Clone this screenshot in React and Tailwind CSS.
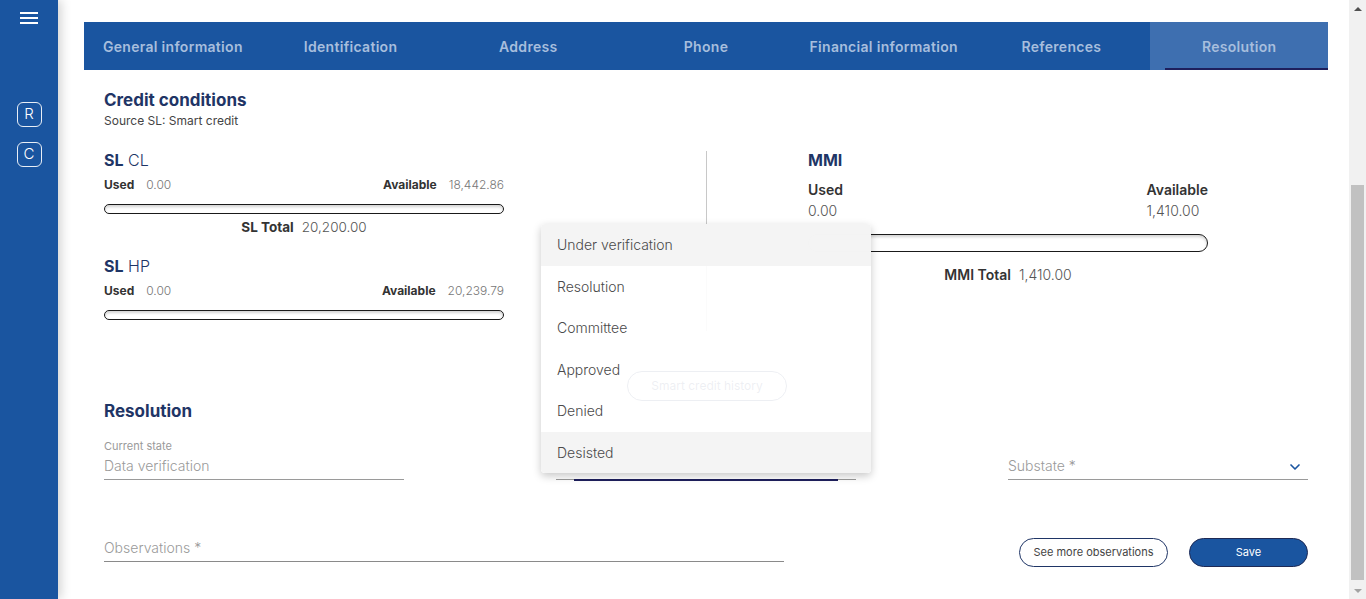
import { ChevronDown } from 'lucide-react';

const tabs = [
  'General information',
  'Identification',
  'Address',
  'Phone',
  'Financial information',
  'References',
  'Resolution',
];

const states = ['Under verification', 'Resolution', 'Committee', 'Approved', 'Denied', 'Desisted'];

function Bar({ tall }) {
  return (
    <div
      className={`w-full rounded-full border border-[#1a1a1a] bg-white shadow-[inset_0_2px_3px_rgba(0,0,0,0.18)] ${
        tall ? 'h-[18px]' : 'h-[10px]'
      }`}
    />
  );
}

function LineBlock({ title, sub, available, total }) {
  return (
    <div>
      <div className="h-[20px] text-[16px] leading-[20px] text-[#1f3566]">
        <span className="font-bold">{title}</span> <span className="font-light">{sub}</span>
      </div>
      <div className="mt-[7px] flex h-[16px] items-center justify-between text-[12px] leading-[16px]">
        <div>
          <span className="font-bold text-[#333]">Used</span>
          <span className="ml-3 font-light text-[#777]">0.00</span>
        </div>
        <div>
          <span className="font-bold text-[#333]">Available</span>
          <span className="ml-3 font-light text-[#777]">{available}</span>
        </div>
      </div>
      <div className="mt-[11px]">
        <Bar />
      </div>
      {total && (
        <div className="mt-[5px] flex h-[16px] justify-center text-[13.5px] leading-[16px]">
          <span className="font-bold text-[#333]">SL Total</span>
          <span className="ml-2 font-light text-[#555]">{total}</span>
        </div>
      )}
    </div>
  );
}

export default function App() {
  return (
    <div className="flex h-[599px] w-full overflow-hidden bg-white font-[Inter,sans-serif]">
      {/* side rail */}
      <aside className="z-10 flex w-[58px] shrink-0 flex-col items-center bg-[#1a55a0] shadow-[3px_0_10px_rgba(0,0,0,0.18)]">
        <div className="mt-[12px] flex w-[18px] flex-col gap-[3px]">
          <span className="h-[2px] bg-white" />
          <span className="h-[2px] bg-white" />
          <span className="h-[2px] bg-white" />
        </div>
        <div className="mt-[78px] flex h-[25px] w-[25px] items-center justify-center rounded-[6px] border border-white/90 text-[15px] font-light text-white">
          R
        </div>
        <div className="mt-[15px] flex h-[25px] w-[25px] items-center justify-center rounded-[6px] border border-white/90 text-[15px] font-light text-white">
          C
        </div>
      </aside>

      {/* page */}
      <main className="relative flex-1 pl-[26px] pr-[21px] pt-[22px]">
        <nav className="grid h-[48px] grid-cols-7 bg-[#1a55a0]">
          {tabs.map((t, i) => {
            const active = i === tabs.length - 1;
            return (
              <div
                key={t}
                className={`relative flex items-center justify-center text-[14px] font-semibold tracking-[0.3px] text-[#a7bedd] ${
                  active ? 'bg-[#3e6fb0]' : ''
                }`}
              >
                {t}
                {active && <span className="absolute bottom-0 left-[15px] right-0 h-[2px] bg-[#1e1f5c]" />}
              </div>
            );
          })}
        </nav>

        <div className="px-[20px]">
          <h2 className="mt-[18px] h-[24px] text-[17px] font-bold leading-[24px] text-[#1f3566]">Credit conditions</h2>
          <p className="mt-[1px] h-[16px] text-[12px] leading-[16px] text-[#444]">Source SL: Smart credit</p>

          <div className="mt-[21px] flex">
            <div className="w-[400px]">
              <LineBlock title="SL" sub="CL" available="18,442.86" total="20,200.00" />
              <div className="mt-[21px]">
                <LineBlock title="SL" sub="HP" available="20,239.79" />
              </div>
            </div>

            <div className="ml-[202px] mt-[1px] h-[180px] w-px bg-[#c8c8c8]" />

            <div className="ml-[101px] w-[400px]">
              <div className="h-[20px] text-[16px] font-bold leading-[20px] text-[#1f3566]">MMI</div>
              <div className="mt-[10px] flex justify-between text-[14px] leading-[20px]">
                <div>
                  <div className="font-semibold text-[#333]">Used</div>
                  <div className="mt-px font-light text-[#555]">0.00</div>
                </div>
                <div>
                  <div className="font-semibold text-[#333]">Available</div>
                  <div className="mt-px font-light text-[#555]">1,410.00</div>
                </div>
              </div>
              <div className="mt-[13px]">
                <Bar tall />
              </div>
              <div className="mt-[13px] flex justify-center text-[14px] leading-[20px]">
                <span className="font-semibold text-[#333]">MMI Total</span>
                <span className="ml-2 font-light text-[#555]">1,410.00</span>
              </div>
            </div>
          </div>

          <div className="mt-[40px] flex justify-center pl-[2px]">
            <button className="h-[30px] w-[160px] rounded-full border border-[#1f3566] text-[12px] text-[#1f3566]">
              Smart credit history
            </button>
          </div>

          <h2 className="mt-[-2px] h-[24px] text-[17px] font-bold leading-[24px] text-[#1f3566]">Resolution</h2>

          <div className="mt-[16px] flex justify-between">
            <div className="w-[300px] border-b border-[#9a9a9a] pb-[3px]">
              <div className="h-[14px] text-[11px] leading-[14px] text-[#9a9a9a]">Current state</div>
              <div className="mt-[3px] h-[20px] text-[14px] font-light leading-[20px] text-[#9a9a9a]">Data verification</div>
            </div>
            <div className="relative flex w-[300px] items-end justify-end border-b border-[#9a9a9a] pb-[3px]">
              <ChevronDown size={14} className="mb-[3px] mr-[6px] text-[#c8c8c8]" />
              <span className="absolute bottom-[-2px] left-[18px] right-[18px] h-[2px] bg-[#1e1f5c]" />
            </div>
            <div className="flex w-[300px] items-end justify-between border-b border-[#9a9a9a] pb-[3px]">
              <span className="h-[20px] text-[14px] font-light leading-[20px] text-[#9a9a9a]">Substate *</span>
              <ChevronDown size={16} strokeWidth={2.5} className="mb-[1px] mr-[5px] text-[#1a55a0]" />
            </div>
          </div>

          <div className="mt-[58px] flex items-end justify-between">
            <div className="w-[680px] border-b border-[#8a8a8a] pb-[3px]">
              <span className="block h-[20px] text-[14px] font-light leading-[20px] text-[#9a9a9a]">Observations *</span>
            </div>
            <div className="mb-[-5px] flex gap-[21px]">
              <button className="h-[29px] w-[149px] rounded-full border border-[#1f3566] text-[11px] text-[#444]">
                See more observations
              </button>
              <button className="h-[29px] w-[119px] rounded-full border border-[#1e2a55] bg-[#1a55a0] text-[11px] text-white">
                Save
              </button>
            </div>
          </div>
        </div>

        {/* open state menu */}
        <ul className="absolute left-[483px] top-[224px] w-[330px] rounded-[4px] bg-white/[0.92] py-0 shadow-[0_3px_8px_rgba(0,0,0,0.22)]">
          {states.map((s, i) => (
            <li
              key={s}
              className={`flex h-[41.5px] items-center pl-[16px] text-[14px] font-light text-[#4a4a4a] ${
                i === 0 || i === states.length - 1 ? 'bg-[#f3f3f3]/[0.92]' : ''
              } ${i === 0 ? 'rounded-t-[4px]' : ''} ${i === states.length - 1 ? 'rounded-b-[4px]' : ''}`}
            >
              {s}
            </li>
          ))}
        </ul>
      </main>

      {/* scrollbar */}
      <div className="flex w-[17px] shrink-0 flex-col bg-[#f1f1f1]">
        <div className="flex h-[17px] items-center justify-center">
          <span className="h-0 w-0 border-x-[4px] border-b-[4px] border-x-transparent border-b-[#505050]" />
        </div>
        <div className="flex flex-1 flex-col px-[2px]">
          <div className="h-[168px]" />
          <div className="flex-1 bg-[#c1c1c1]" />
          <div className="h-[2px]" />
        </div>
        <div className="flex h-[17px] items-center justify-center">
          <span className="h-0 w-0 border-x-[4px] border-t-[4px] border-x-transparent border-t-[#a3a3a3]" />
        </div>
      </div>
    </div>
  );
}
